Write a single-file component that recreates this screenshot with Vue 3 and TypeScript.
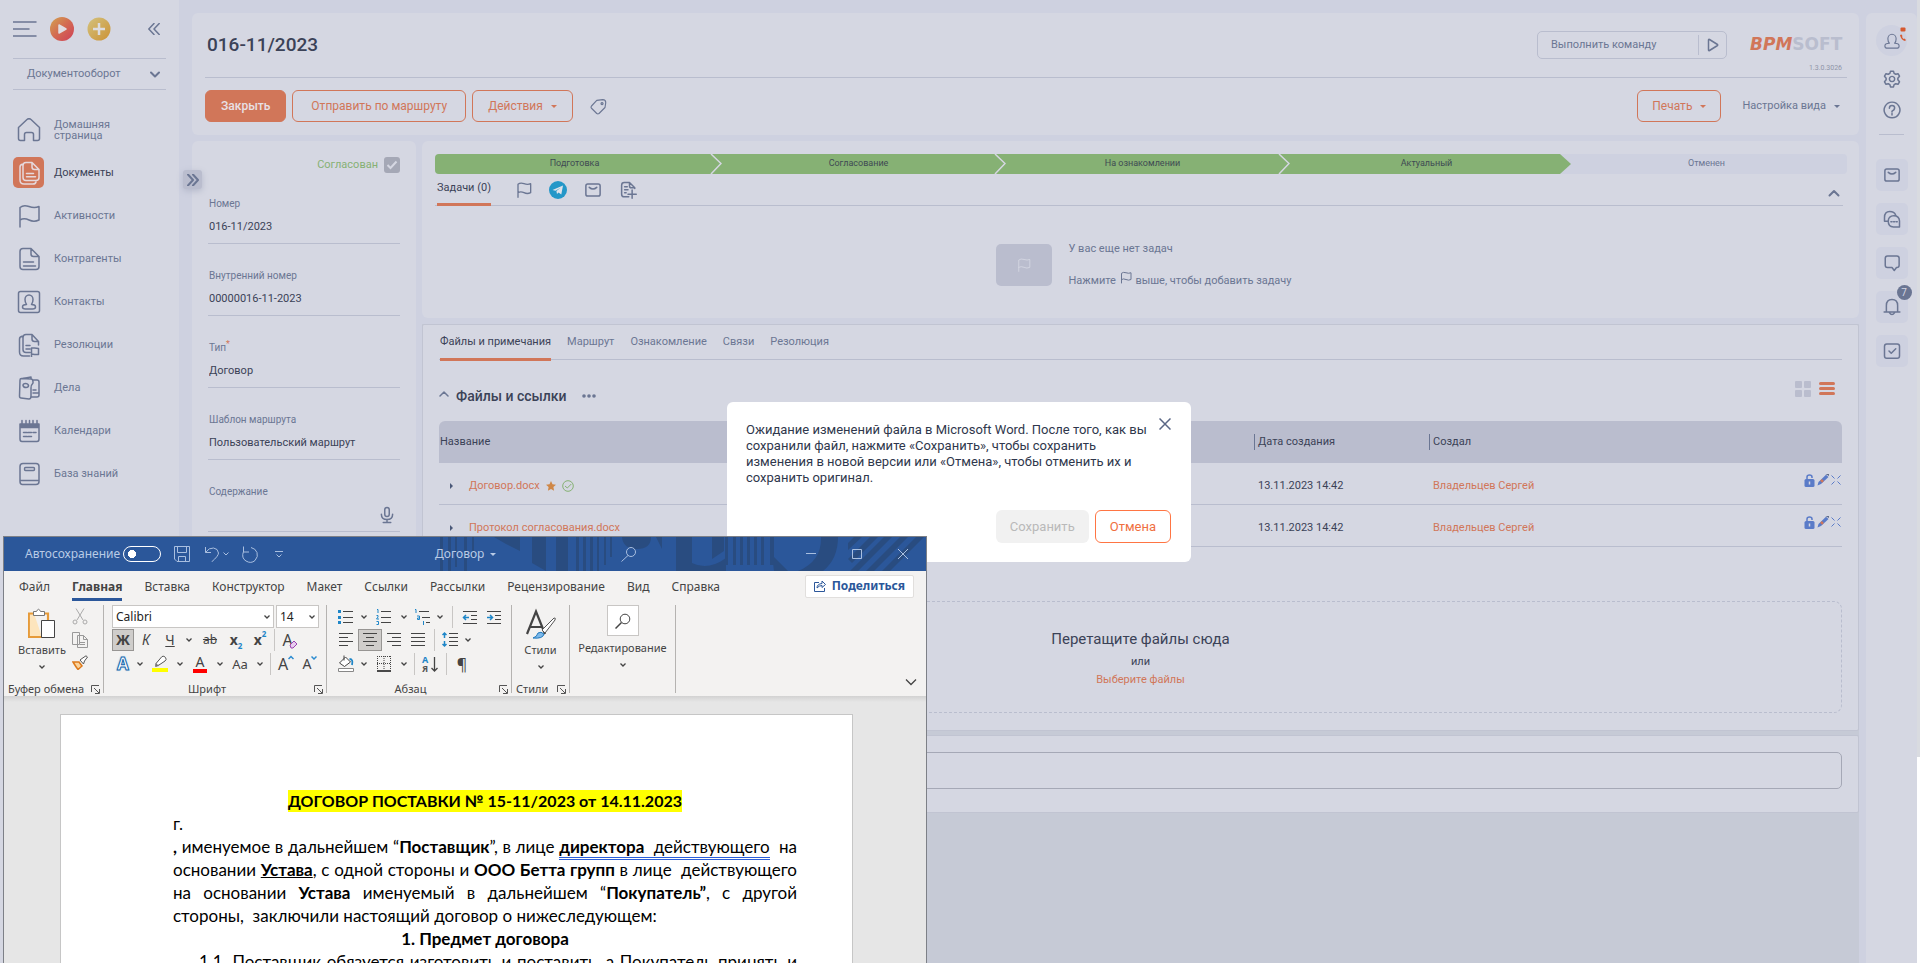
<script setup lang="ts">
import { ref } from 'vue'

interface NavItem { label: string; icon: string; active?: boolean }
interface Field { id: string; label: string; value: string; required?: boolean; mic?: boolean }
interface Tool { k: string; w: number; name: string; on?: boolean }

const icons: Record<string, string> = {
  home: 'M1.5 9.5 10 1.5q2-1.600 4 0l8.500 8v11q0 2-2 2h-4v-6q0-2-2-2h-5q-2 0-2 2v6h-4q-2 0-2-2z',
  flag: 'M3 23V3.500q3.500-3 9-1t10 0V16q-5 2.500-10 0t-9 0',
  doc: 'M14 1.500H6q-3 0-3 3v15q0 3 3 3h13q3 0 3-3v-10L14 1.500V7q0 2.500 2.500 2.500H22M6.500 15h10M6.500 19h12',
  docs: 'M15 1.500H9q-3 0-3 3v12q0 3 3 3h10q3 0 3-3V8.500L15 1.500V6q0 2.500 2.500 2.500H22M6 3Q3 3.500 3 6v13q0 4 4 4h9q2.500 0 3-2M9.500 12.500h7M9.500 15.800h9',
  contact: 'M3.500 1.500h17q2 0 2 2v17q0 2-2 2h-17q-2 0-2-2v-17q0-2 2-2zM8 9.500a4 4.500 0 0 1 8 0q0 3-1.500 5 4 0 4 2.500 0 2-3 2H8.500q-3 0-3-2 0-2.500 4-2.500Q8 12.500 8 9.500z',
  resol: 'M21.500 12V8.500L15 1.500H9q-3 0-3 3v12q0 3 3 3h4M15 1.500V6q0 2.500 2.500 2.500h4M6 3Q2.500 3.500 2.500 6v13q0 4 4 4h6M9 12.500h4M9 16h4M14.500 24v-9h3l4 .5v6h-4l-3-.5',
  cases: 'M3 4q0-1.500 1.500-1.500L14 3q2 0 2 3v1q-2 2-2 5v8q0 3-2 3l-8-1q-1.500 0-1.500-2zM6 2.500l8-1.500v2M16 4h4q2 0 2 2v13q0 2-2 2h-6M6 9.500q0-2 2.500-2t3 2q0 2-2.500 2t-3-2M16 14h3M16 17h5',
  cal: 'M3 5h19v15q0 2.500-2 2.500H5q-2 0-2-2.500zM3 6h19M3 7.500h19M3 8.500h19M5 1.500V4M9 1.500V4M12.500 1.500V4M16 1.500V4M20 1.500V4M6.500 13.500H10M11 13.500h3.500M16 13.500h3M6.500 17.500H10M11 17.500h3.500',
  book: 'M6 1.500h13q3 0 3 3v15q0 3-3 3H5.500q-2.500 0-2.500-3v-15q0-3 3-3zM3 18.500h19M8.500 5.500h8q1 0 1 1.500t-1 1.500h-8q-1 0-1-1.500t1-1.500z',
  mail: 'M5 4h14q2.500 0 2.500 2.500v11Q21.500 20 19 20H5q-2.500 0-2.500-2.500v-11Q2.500 4 5 4zM7 8.500q5 4.500 10 0',
  chat: 'M17 7q-2-5-8-5-7 0-7 8v5h5M14.500 7.500q7 0 7.500 7v8h-8q-7 0-7-7.500 0-7 7.500-7.500zM10.500 15.500h1.500M14 15.500h1.500M17.500 15.500H19',
  comment: 'M6 2.500h12.500q3 0 3 3V15q0 3-3 3H18l-3 4-3-4H6q-3 0-3-3V5.500q0-3 3-3z',
  bell: 'M4.500 18.500V10q0-8 7.500-8t7.500 8v8.500M1.500 18.500h21M8.500 19.500q3.500 5 7 0',
  task: 'M5 2.500h14q3 0 3 3v13q0 3-3 3H5q-3 0-3-3v-13q0-3 3-3zM8 12l3 3 6-6',
  gear: 'M10 1.500h4l.8 3 2.200 1.200 3-.8 2 3.400-2.200 2.700v2l2.200 2.700-2 3.400-3-.8-2.200 1.200-.8 3h-4l-.8-3L7 18.300l-3 .8-2-3.400 2.200-2.700v-2L2 8.300l2-3.400 3 .8 2.200-1.200zM12 8.500a3.500 3.500 0 1 0 .1 0z',
  help: 'M12 1.500A10.500 10.500 0 1 0 12.100 1.500zM8.500 9.500q0-3.500 3.500-3.500t3.500 3-3.500 4.500v1M12 16.500v2',
  user: 'M6.500 9a5.500 6 0 0 1 11 0q0 4-2 6 6 0 6 3.500 0 3-3 3h-13q-3 0-3-3Q2.500 15 8.500 15q-2-2-2-6z',
  docplus: 'M13 21H7q-3.500 0-3.500-3.500v-12Q3.500 2 7 2h7l7 7v1M14 2v4.500q0 2.500 2.500 2.500H21M7.500 7.500H11M7.500 11.500H12M7.500 15.500h2M17.500 12v11M12 17.500h11',
  tag: 'M9 4.500 17 3.500q4 0 4 4L20 14l-8 8q-1.500 1-3 0L2 15q-1.200-1.500 0-3zM16 7.500a1.300 1.300 0 1 0 .1 0z',
  mic: 'M12 2q3 0 3 3v6q0 3-3 3t-3-3V5q0-3 3-3zM4.500 11q0 7 7.500 7t7.500-7M12 18v4M7 22h10',
}

const nav: NavItem[] = [
  { label: 'Домашняя страница', icon: 'home' },
  { label: 'Документы', icon: 'docs', active: true },
  { label: 'Активности', icon: 'flag' },
  { label: 'Контрагенты', icon: 'doc' },
  { label: 'Контакты', icon: 'contact' },
  { label: 'Резолюции', icon: 'resol' },
  { label: 'Дела', icon: 'cases' },
  { label: 'Календари', icon: 'cal' },
  { label: 'База знаний', icon: 'book' },
]

const fields = ref<Field[]>([
  { id: 'num', label: 'Номер', value: '016-11/2023' },
  { id: 'inner', label: 'Внутренний номер', value: '00000016-11-2023' },
  { id: 'type', label: 'Тип', value: 'Договор', required: true },
  { id: 'route', label: 'Шаблон маршрута', value: 'Пользовательский маршрут' },
  { id: 'content', label: 'Содержание', value: '', mic: true },
])

const stages = ['Подготовка', 'Согласование', 'На ознакомлении', 'Актуальный', 'Отменен']
const tabs = ['Файлы и примечания', 'Маршрут', 'Ознакомление', 'Связи', 'Резолюция']
const files = [
  { name: 'Договор.docx', marked: true, date: '13.11.2023 14:42', author: 'Владельцев Сергей' },
  { name: 'Протокол согласования.docx', marked: false, date: '13.11.2023 14:42', author: 'Владельцев Сергей' },
]
const rail = [
  { icon: 'mail', name: 'Почта' },
  { icon: 'chat', name: 'Чаты' },
  { icon: 'comment', name: 'Сообщения' },
  { icon: 'bell', name: 'Уведомления', badge: 7 },
  { icon: 'task', name: 'Задачи' },
]

const wordTabs = ['Файл', 'Главная', 'Вставка', 'Конструктор', 'Макет', 'Ссылки', 'Рассылки', 'Рецензирование', 'Вид', 'Справка']
const caret = (w = 12): Tool => ({ k: 'caret', w, name: 'Ещё' })
const sep = (w = 8): Tool => ({ k: 'sep', w, name: '' })
const fontRow1: Tool[] = [
  { k: 'bold', w: 22, name: 'Полужирный', on: true }, { k: 'italic', w: 24, name: 'Курсив' },
  { k: 'under', w: 24, name: 'Подчёркнутый' }, caret(14), { k: 'strike', w: 28, name: 'Зачёркнутый' },
  { k: 'sub', w: 24, name: 'Подстрочный' }, { k: 'sup', w: 24, name: 'Надстрочный' }, sep(4),
  { k: 'clear', w: 28, name: 'Очистить формат' },
]
const fontRow2: Tool[] = [
  { k: 'effects', w: 22, name: 'Эффекты' }, caret(), { k: 'marker', w: 28, name: 'Выделение' }, caret(),
  { k: 'color', w: 28, name: 'Цвет' }, caret(), { k: 'case', w: 28, name: 'Регистр' }, caret(), sep(8),
  { k: 'grow', w: 24, name: 'Увеличить' }, { k: 'shrink', w: 24, name: 'Уменьшить' },
]
const paraRows: Tool[][] = [
  [{ k: 'bullets', w: 24, name: 'Маркеры' }, caret(), { k: 'numbers', w: 28, name: 'Нумерация' }, caret(),
    { k: 'multi', w: 24, name: 'Многоуровневый список' }, caret(), sep(12), { k: 'outdent', w: 24, name: 'Уменьшить отступ' },
    { k: 'indent', w: 24, name: 'Увеличить отступ' }],
  [{ k: 'left', w: 24, name: 'По левому краю' }, { k: 'center', w: 24, name: 'По центру', on: true },
    { k: 'right', w: 24, name: 'По правому краю' }, { k: 'just', w: 24, name: 'По ширине' }, sep(),
    { k: 'spacing', w: 24, name: 'Интервал' }, caret()],
  [{ k: 'bucket', w: 24, name: 'Заливка' }, caret(), { k: 'borders', w: 28, name: 'Границы' }, caret(), sep(),
    { k: 'sort', w: 24, name: 'Сортировка' }, sep(), { k: 'pil', w: 24, name: 'Знаки' }],
]
const toolPaths: Record<string, string> = {
  left: 'M3 3.500h14M3 7.500h9M3 11.500h14M3 15.500h9',
  center: 'M3 3.500h14M6 7.500h8M3 11.500h14M6 15.500h8',
  right: 'M3 3.500h14M8 7.500h9M3 11.500h14M8 15.500h9',
  just: 'M3 3.500h14M3 7.500h14M3 11.500h14M3 15.500h14',
  bullets: 'M7 4.500h10M7 10.500h10M7 15.500h10',
  numbers: 'M7 4.500h10M7 10.500h10M7 15.500h10',
  multi: 'M7 4.500h10M10 10.500h8M14 15.500h4',
  outdent: 'M3 4.500h14M11 8.500h6M11 12.500h6M3 16.500h14',
  indent: 'M3 4.500h14M11 8.500h6M11 12.500h6M3 16.500h14',
  spacing: 'M9 3.500h9M9 7.500h9M9 11.500h9M9 15.500h9',
}

const activeTab = ref(0)
const command = ref('')
const approved = ref(true)
const note = ref('')
const font = ref('Calibri')
const size = ref('14')
</script>

<template>
  <div class="desk">
    <div class="app">
      <aside class="side">
        <div class="side-top">
          <button class="bare" aria-label="Меню">
            <svg width="24" height="18" class="ln"><path d="M0 2h23M0 9h16M0 16h23" /></svg>
          </button>
          <button class="bare" aria-label="Запуск">
            <svg width="24" height="24">
              <defs>
                <linearGradient id="gp" x1="0" y1="0" x2="1" y2="1"><stop offset="0" stop-color="#d3a351" /><stop offset=".5" stop-color="#d36a52" /><stop offset="1" stop-color="#cf3f58" /></linearGradient>
                <linearGradient id="gy" x1="0" y1="0" x2="1" y2="1"><stop offset="0" stop-color="#d3c27e" /><stop offset="1" stop-color="#cc9235" /></linearGradient>
              </defs>
              <circle cx="12" cy="12" r="12" fill="url(#gp)" /><path d="M9 8v8l7-4z" fill="#e0dde2" stroke="#e0dde2" stroke-width="1.500" stroke-linejoin="round" />
            </svg>
          </button>
          <button class="bare" aria-label="Добавить">
            <svg width="24" height="24"><circle cx="12" cy="12" r="11.500" fill="url(#gy)" /><path d="M12 6v12M6 12h12" stroke="#dcdce0" stroke-width="2.500" /></svg>
          </button>
          <button class="bare fold" aria-label="Свернуть">
            <svg width="12" height="12" class="ln"><path d="M6 .5.800 6 6 11.500M11.200.5 6 6l5.200 5.500" /></svg>
          </button>
        </div>
        <button class="workplace">
          <span>Документооборот</span>
          <svg width="10" height="7" class="ln bold"><path d="m1 1.500 4 4 4-4" /></svg>
        </button>
        <nav>
          <a v-for="n in nav" :key="n.label" href="#" class="nav" :class="{ active: n.active }">
            <span class="nav-ico"><svg width="24" height="24" viewBox="0 0 24 24" class="ln"><path :d="icons[n.icon]" /></svg></span>
            <span class="nav-label">{{ n.label }}</span>
          </a>
        </nav>
      </aside>

      <main class="main">
        <header class="panel head">
          <div class="head-top">
            <h1>016-11/2023</h1>
            <div class="cmd">
              <input v-model="command" aria-label="Выполнить команду" placeholder="Выполнить команду">
              <button class="bare" aria-label="Выполнить"><svg width="12" height="14" class="ln"><path d="M1.500 2v10q0 1 1 .5l8-5q.6-.5 0-1l-8-5q-1-.5-1 .5z" /></svg></button>
            </div>
            <div class="brand">
              <div class="logo"><b>BPM</b><span>SOFT</span></div>
              <small>1.3.0.3026</small>
            </div>
          </div>
          <div class="head-bar">
            <button class="btn solid">Закрыть</button>
            <button class="btn send">Отправить по маршруту</button>
            <button class="btn">Действия<i class="tri" /></button>
            <button class="bare tag" aria-label="Теги"><svg width="18" height="18" viewBox="0 0 24 24" class="ln"><path :d="icons.tag" /></svg></button>
            <button class="btn print push">Печать<i class="tri" /></button>
            <button class="bare view">Настройка вида<i class="tri" /></button>
          </div>
        </header>

        <div class="body">
          <section class="panel form">
            <button class="expand" aria-label="Развернуть">
              <svg width="12" height="12" class="ln bold"><path d="M1 .5 6 6l-5 5.500M6 .5 11 6l-5 5.500" /></svg>
            </button>
            <label class="approved">Согласован<input v-model="approved" type="checkbox"><svg width="12" height="10"><path d="m1.500 5 3 3 6-6.500" fill="none" stroke="#d5d7e2" stroke-width="2" /></svg></label>
            <div v-for="f in fields" :key="f.id" class="field">
              <label :for="f.id">{{ f.label }}<sup v-if="f.required">*</sup></label>
              <div class="val">
                <input :id="f.id" v-model="f.value">
                <svg v-if="f.mic" width="18" height="18" viewBox="0 0 24 24" class="ln thick"><path :d="icons.mic" /></svg>
              </div>
            </div>
          </section>

          <div class="content">
            <section class="panel tasks">
              <ol class="stages">
                <li v-for="(s, i) in stages" :key="s" :class="{ done: i < 4, last: i === 3 }">
                  <span>{{ s }}</span>
                  <svg v-if="i < 3" width="12" height="20"><path d="m1 0 10 9.500L1 20" fill="none" stroke="#d5d7e2" stroke-width="1.500" /></svg>
                </li>
              </ol>
              <div class="task-bar">
                <button class="tab on">Задачи (0)</button>
                <button class="bare" aria-label="Задача"><svg width="16" height="16" viewBox="0 0 24 24" class="ln thick"><path :d="icons.flag" /></svg></button>
                <button class="bare" aria-label="Telegram"><svg width="18" height="18"><circle cx="9" cy="9" r="9" fill="#2497c8" /><path d="m3.500 9 10.500-4.500-1.700 9L9.500 11.500 8 13l-.6-3L12 6.500 6.500 9.800z" fill="#dfe3ea" /></svg></button>
                <button class="bare" aria-label="Письмо"><svg width="18" height="18" viewBox="0 0 24 24" class="ln thick"><path :d="icons.mail" /></svg></button>
                <button class="bare" aria-label="Документ"><svg width="18" height="18" viewBox="0 0 24 24" class="ln thick"><path :d="icons.docplus" /></svg></button>
                <button class="bare push" aria-label="Свернуть задачи"><svg width="12" height="8" class="ln bold"><path d="m1.500 6.500 4.500-4.500 4.500 4.500" /></svg></button>
              </div>
              <div class="empty">
                <div class="empty-box"><svg width="14" height="14" viewBox="0 0 24 24" class="ln pale"><path :d="icons.flag" /></svg></div>
                <div class="empty-text">
                  <p>У вас еще нет задач</p>
                  <p>Нажмите <svg width="12" height="13" viewBox="0 0 24 24" class="ln thick"><path :d="icons.flag" /></svg> выше, чтобы добавить задачу</p>
                </div>
              </div>
            </section>

            <div class="lower">
              <section class="sheet files">
                <div class="tabs">
                  <button v-for="(t, i) in tabs" :key="t" class="tab" :class="{ on: i === activeTab }" @click="activeTab = i">{{ t }}</button>
                </div>
                <div class="files-head">
                  <svg width="10" height="6" class="ln"><path d="m1 5 4-4 4 4" /></svg>
                  <h2>Файлы и ссылки</h2>
                  <button class="bare dots" aria-label="Действия с файлами"><svg width="14" height="4" fill="#6b7693"><circle cx="2" cy="2" r="1.800" /><circle cx="7" cy="2" r="1.800" /><circle cx="12" cy="2" r="1.800" /></svg></button>
                  <button class="bare push" aria-label="Плитка"><svg width="16" height="16" fill="#babdce"><rect width="7" height="7" rx="1" /><rect x="9" width="7" height="7" rx="1" /><rect y="9" width="7" height="7" rx="1" /><rect x="9" y="9" width="7" height="7" rx="1" /></svg></button>
                  <button class="bare" aria-label="Список"><svg width="16" height="13" fill="#d17659"><rect width="16" height="3" rx="1.500" /><rect y="5" width="16" height="3" rx="1.500" /><rect y="10" width="16" height="3" rx="1.500" /></svg></button>
                </div>
                <table>
                  <colgroup><col><col class="c-date"><col class="c-author"><col class="c-act"></colgroup>
                  <thead><tr><th>Название</th><th class="bar">Дата создания</th><th class="bar">Создал</th><th /></tr></thead>
                  <tbody>
                    <tr v-for="f in files" :key="f.name">
                      <td>
                        <div class="fname">
                          <svg width="3" height="6" fill="#4a5878"><path d="m0 0 3 3-3 3z" /></svg>
                          <a href="#">{{ f.name }}</a>
                          <svg v-if="f.marked" width="10" height="10" fill="#cf8747"><path d="m5 0 1.500 3.300 3.500.4-2.600 2.400.7 3.600L5 8 1.900 9.700l.7-3.600L0 3.700l3.500-.4z" /></svg>
                          <svg v-if="f.marked" width="12" height="12" fill="none" stroke="#86b174"><circle cx="6" cy="6" r="5.300" /><path d="m3 6 2.300 2 4-4" /></svg>
                        </div>
                      </td>
                      <td>{{ f.date }}</td>
                      <td><a href="#">{{ f.author }}</a></td>
                      <td>
                        <div class="acts">
                          <svg width="11" height="13"><path d="M3 6V3q0-2 2.500-2T8 3v1" fill="none" stroke="#5a7bc8" stroke-width="1.500" /><rect x=".5" y="5" width="10" height="8" rx="1.500" fill="#5a7bc8" /><path d="M5.500 7.500v3" stroke="#d5d7e2" stroke-width="1.500" /></svg>
                          <svg width="12" height="12"><path d="M.5 11.500 1.500 8 9 .8 11.500 3 4 10z" fill="#5a7bc8" /><path d="m4 5.800 2 2" stroke="#d17659" stroke-width="2.500" /><path d="M8.500 0H12v2z" fill="#5d6b8c" /></svg>
                          <svg width="10" height="12" stroke="#5a7bc8"><path d="m.5 1.500 3 3M9.500 1.500l-3 3M.5 10.500l3-3M9.500 10.500l-3-3" /></svg>
                        </div>
                      </td>
                    </tr>
                  </tbody>
                </table>
                <div class="drop">
                  <p class="drop-title">Перетащите файлы сюда</p>
                  <p>или</p>
                  <a href="#">Выберите файлы</a>
                </div>
              </section>
              <section class="sheet notes">
                <input v-model="note" aria-label="Примечание">
              </section>
            </div>
          </div>
        </div>
      </main>

      <aside class="rail">
        <button class="avatar" aria-label="Профиль">
          <svg width="18" height="18" viewBox="0 0 24 24" class="ln"><path :d="icons.user" /></svg>
          <svg width="6" height="14" class="call"><rect x=".5" y=".5" width="5" height="4" rx="1" fill="#d6592f" /><path d="M0 8l1.500-.5 1 1.500-.5 1 1.500 2 1-.5L6 13l-1 1Q1 13 0 8z" fill="#d6592f" /></svg>
        </button>
        <button class="bare gear" aria-label="Настройки"><svg width="18" height="18" viewBox="0 0 24 24" class="ln thick"><path :d="icons.gear" /></svg></button>
        <button class="bare help" aria-label="Справка"><svg width="18" height="18" viewBox="0 0 24 24" class="ln thick"><path :d="icons.help" /></svg></button>
        <hr>
        <button v-for="r in rail" :key="r.name" class="rail-btn" :aria-label="r.name">
          <svg width="18" height="18" viewBox="0 0 24 24" class="ln thick"><path :d="icons[r.icon]" /></svg>
          <span v-if="r.badge" class="badge">{{ r.badge }}</span>
        </button>
      </aside>
      <div class="scroll"><div class="thumb" /></div>
    </div>

    <div class="modal" role="dialog" aria-modal="true" aria-labelledby="msg">
      <div class="modal-top">
        <p id="msg">Ожидание изменений файла в Microsoft Word. После того, как вы сохранили файл, нажмите «Сохранить», чтобы сохранить изменения в новой версии или «Отмена», чтобы отменить их и сохранить оригинал.</p>
        <button class="bare" aria-label="Закрыть окно"><svg width="12" height="12"><path d="m.5.5 11 11m0-11-11 11" stroke="#5a6785" stroke-width="1.500" /></svg></button>
      </div>
      <div class="modal-acts">
        <button class="save" disabled>Сохранить</button>
        <button class="cancel">Отмена</button>
      </div>
    </div>

    <div class="word">
      <div class="wbar">
        <svg class="art" width="490" height="34" fill="#294c80">
          <path d="M4 0h3v34H4zM12 0h3v34h-3zM19 0h2v30h-2zM28 0h3v34h-3zM36 0h2v20h-2zM58 0h26v14L70 7zM96 0h14v34l-14-8zM120 0h12v34h-12zM140 0h3v34h-3zM147 0h3v34h-3zM154 0h3v34h-3zM161 0h2v34h-2zM168 0h2v28h-2zM174 0h2v20h-2z" />
          <path d="M186 0h29q0 12-14 12T186 0zM220 0h6v12zM240 0h16v34h-16zM256 26q16 8 34-5v13h-34zM276 0h12v14l-12 8zM289 0h3v28h-3zM297 0h3v28h-3zM304 0h3v28h-3zM311 0h3v28h-3zM318 0h3v28h-3zM325 0h3v28h-3zM334 0h4v28h-4zM336 18l16 16h-14zM362 34q24-10 23-34h17q0 22-15 34z" />
          <path d="m412 6 6-6h8l-14 13zM412 22 434 0h8l-26 26zM414 34l34-34h8l-34 34zM430 34l34-34h8l-34 34zM446 34l34-34h8l-34 34z" />
        </svg>
        <label class="auto">Автосохранение<input type="checkbox" role="switch"></label>
        <button class="bare" aria-label="Сохранить"><svg width="16" height="16" class="wl"><path d="M.5.5h15v15H3l-2.500-2.500zM3.500.5v6h9v-6M4.500 15.500v-5h7v5" /></svg></button>
        <button class="bare undo" aria-label="Отменить"><svg width="26" height="16" class="wl"><path d="M1.500 1v5.500H7M1.500 6.500Q5 1.500 9.500 2t5 5q0 3-7 9M19.500 6.500 22 9l2.500-2.500" /></svg></button>
        <button class="bare" aria-label="Повторить"><svg width="18" height="17" class="wl"><path d="M2.500.5V6H8M2.500 5.500Q0 12 5 15t9-.5q3.500-4 2-8T10 1.500" /></svg></button>
        <button class="bare more" aria-label="Настройка панели"><svg width="8" height="8" class="wl"><path d="M0 1.500h8M1.500 4.500 4 7l2.500-2.500" /></svg></button>
        <span class="wtitle">Договор<i class="tri" /></span>
        <button class="bare find" aria-label="Поиск"><svg width="16" height="16" class="wl"><circle cx="10" cy="6" r="4.500" /><path d="M7 9.500.5 15.500" /></svg></button>
        <button class="bare win" aria-label="Свернуть окно"><svg width="12" height="12" class="wl"><path d="M1 5.500h10" /></svg></button>
        <button class="bare win" aria-label="Развернуть окно"><svg width="12" height="12" class="wl"><path d="M1.500 1.500h9v9h-9z" /></svg></button>
        <button class="bare win" aria-label="Закрыть Word"><svg width="12" height="12" class="wl"><path d="m1 1 10 10M11 1 1 11" /></svg></button>
      </div>
      <div class="wtabs">
        <button v-for="(t, i) in wordTabs" :key="t" :class="{ on: i === 1 }">{{ t }}</button>
        <button class="share"><svg width="12" height="12" fill="none" stroke="#2b579a"><path d="M5 2.500H.5v9h10V8M3 8q0-4 5-4.500V1l3.500 3.500L8 7.500V5.500Q5 5.500 3 8z" /></svg>Поделиться</button>
      </div>
      <div class="ribbon">
        <div class="grp clip">
          <div class="clip-in">
            <button class="big"><svg width="28" height="32"><path d="M6 5.500H.8V29H14" fill="#fde5bd" stroke="#e69b3a" stroke-width="2.200" /><path d="M6 5.500h14V12" fill="none" stroke="#e69b3a" stroke-width="2.200" /><path d="M5.500 7.500v-4h3q2-4.500 4 0h4v4z" fill="#fff" stroke="#777" /><path d="M13.500 12.500h13v17h-13z" fill="#fff" stroke="#444" /></svg>Вставить<svg width="8" height="6" class="cr"><path d="m1.500 1.500 2.500 2.500 2.500-2.500" /></svg></button>
            <div class="clip-col">
              <button class="bare" aria-label="Вырезать"><svg width="16" height="17" fill="none" stroke="#aaa"><path d="M4 .5 11 12M12 .5 5 12" /><circle cx="3" cy="14" r="2" /><circle cx="13" cy="14" r="2" /></svg></button>
              <button class="bare" aria-label="Копировать"><svg width="16" height="16" fill="#f3f2f1" stroke="#999"><path d="M.5.500h7v12h-7zM5.500 3.500h6l4 4v8h-10zM11.500 3.500v4h4M8 10.500h5M8 12.500h5" /></svg></button>
              <button class="bare" aria-label="Формат по образцу"><svg width="16" height="15"><path d="M1 7h6l3 4-4 3.500Q4 12 1 7z" fill="#fbd39b" stroke="#dd7a1c" stroke-width="1.500" /><path d="m8 5 2-1.500L14 .800 15.500 2l-3 4-1 3z" fill="#fff" stroke="#555" /></svg></button>
            </div>
          </div>
          <div class="cap">Буфер обмена<svg width="9" height="9" class="ex"><path d="M.5 7V.500H8M3 3l5 5M8.500 4v4.500H4" /></svg></div>
        </div>

        <div class="grp fontg">
          <div class="row">
            <span class="combo wide"><select v-model="font" aria-label="Шрифт"><option>Calibri</option></select><svg width="8" height="6" class="cr"><path d="m1.500 1.500 2.500 2.500 2.500-2.500" /></svg></span>
            <span class="combo"><select v-model="size" aria-label="Размер"><option>14</option></select><svg width="8" height="6" class="cr"><path d="m1.500 1.500 2.500 2.500 2.500-2.500" /></svg></span>
          </div>
          <div v-for="(r, ri) in [fontRow1, fontRow2]" :key="ri" class="row">
            <template v-for="(t, i) in r" :key="i">
              <span v-if="t.k === 'sep'" class="sep" :style="{ width: t.w + 'px' }" />
              <button v-else class="tool" :class="[t.k, { pressed: t.on }]" :aria-label="t.name" :style="{ width: t.w + 'px' }">
                <svg v-if="t.k === 'caret'" width="8" height="6" class="cr"><path d="m1.500 1.500 2.500 2.500 2.500-2.500" /></svg>
                <b v-else-if="t.k === 'bold'">Ж</b>
                <i v-else-if="t.k === 'italic'">К</i>
                <u v-else-if="t.k === 'under'">Ч</u>
                <s v-else-if="t.k === 'strike'">ab</s>
                <template v-else-if="t.k === 'sub'"><b>x</b><sub>2</sub></template>
                <template v-else-if="t.k === 'sup'"><b>x</b><sup>2</sup></template>
                <template v-else-if="t.k === 'clear'">A<svg width="9" height="9"><path d="m1 5 4-4 3 3-4 4H2z" fill="#e7cdef" stroke="#9a43b0" /></svg></template>
                <b v-else-if="t.k === 'effects'">A</b>
                <svg v-else-if="t.k === 'marker'" width="18" height="18"><path d="m5 8.500 6-7q2-1 3.500 1T14 6L8 10l-3 1z" fill="#fff" stroke="#555" /><path d="m5 8 3 3-4 1z" fill="#777" /><path d="M1 13h16v4H1z" fill="#ff0" /></svg>
                <span v-else-if="t.k === 'color'" class="red">A</span>
                <template v-else-if="t.k === 'case'">Aa</template>
                <template v-else>A<svg width="6" height="12" fill="none" stroke="#2b8bd0" stroke-width="1.500"><path :d="t.k === 'grow' ? 'm.5 4 2.500-2.500L5.500 4' : 'm.5 1.500L3 4l2.500-2.500'" /></svg></template>
              </button>
            </template>
          </div>
          <div class="cap">Шрифт<svg width="9" height="9" class="ex"><path d="M.5 7V.500H8M3 3l5 5M8.500 4v4.500H4" /></svg></div>
        </div>

        <div class="grp para">
          <div v-for="(r, ri) in paraRows" :key="ri" class="row">
            <template v-for="(t, i) in r" :key="i">
              <span v-if="t.k === 'sep'" class="sep" :style="{ width: t.w + 'px' }" />
              <button v-else class="tool" :class="{ pressed: t.on }" :aria-label="t.name" :style="{ width: t.w + 'px' }">
                <svg v-if="t.k === 'caret'" width="8" height="6" class="cr"><path d="m1.500 1.500 2.500 2.500 2.500-2.500" /></svg>
                <span v-else-if="t.k === 'pil'" class="pil">¶</span>
                <svg v-else width="20" height="20" fill="none" stroke="#444">
                  <path v-if="toolPaths[t.k]" :d="toolPaths[t.k]" />
                  <path v-if="t.k === 'bullets'" d="M2 3h3v3H2zM2 9h3v3H2zM2 14h3v3H2z" fill="#1e86c8" stroke="none" />
                  <path v-if="t.k === 'numbers'" d="M3 2.500h1V6M2.500 8.500H4v1.500L2.500 12H5M2.500 14.500h2v3h-2" stroke="#1e86c8" />
                  <path v-if="t.k === 'multi'" d="M3 2.500h1V6M5 9h2.500v3.500h-2V11H7M11.500 14v4" stroke="#1e86c8" />
                  <path v-if="t.k === 'outdent'" d="M9 10.500H3.500M6 8l-2.500 2.500L6 13" stroke="#1e86c8" stroke-width="1.500" />
                  <path v-if="t.k === 'indent'" d="M3 10.500h5.500M6 8l2.500 2.500L6 13" stroke="#1e86c8" stroke-width="1.500" />
                  <path v-if="t.k === 'spacing'" d="M4.500 3v5M2.500 5l2-2 2 2M4.500 11v5M2.500 14l2 2 2-2" stroke="#1e86c8" stroke-width="1.500" />
                  <g v-if="t.k === 'bucket'"><path d="m3.500 9 6-6 5 5-6 4.500z" fill="#fff" /><path d="M8 1.500v5" /><path d="M13.500 5q4 0 2.500 6" stroke="#1e86c8" stroke-width="1.800" /><path d="M2.500 14.500h15v3h-15z" fill="#fff" stroke="#888" /></g>
                  <g v-if="t.k === 'borders'"><path d="M3.500 2v14M16.500 2v14M10 2v14M3 2.500h14M3 9.500h14" stroke-dasharray="1 1" /><path d="M3 17h14" stroke="#111" stroke-width="1.500" /></g>
                  <g v-if="t.k === 'sort'"><text x="2" y="9" class="srt a">А</text><text x="2" y="18" class="srt">Я</text><path d="M14.500 3v14M11.500 14l3 3 3-3" stroke-width="1.300" /></g>
                </svg>
              </button>
            </template>
          </div>
          <div class="cap">Абзац<svg width="9" height="9" class="ex"><path d="M.5 7V.500H8M3 3l5 5M8.500 4v4.500H4" /></svg></div>
        </div>

        <div class="grp styles">
          <button class="big"><svg width="32" height="32"><path d="M2 26 11 3.500 20 26M5 19h12" fill="none" stroke="#444" stroke-width="2.200" /><path d="M17 22 29 10q2-.5 1 2L20 25z" fill="#fff" stroke="#555" /><path d="M8 30q4-1 5-5 3-2 6 1-1 5-11 4z" fill="#7db9ea" stroke="#1e78bd" /></svg>Стили<svg width="8" height="6" class="cr"><path d="m1.500 1.500 2.500 2.500 2.500-2.500" /></svg></button>
          <div class="cap">Стили<svg width="9" height="9" class="ex"><path d="M.5 7V.500H8M3 3l5 5M8.500 4v4.500H4" /></svg></div>
        </div>

        <div class="grp edit">
          <button class="big"><span class="lens"><svg width="16" height="16" fill="none" stroke="#444"><circle cx="10" cy="6" r="4.800" /><path d="M6.500 9.500.5 15.500" stroke-width="1.500" /></svg></span>Редактирование<svg width="8" height="6" class="cr"><path d="m1.500 1.500 2.500 2.500 2.500-2.500" /></svg></button>
        </div>
        <button class="bare fold-rb" aria-label="Свернуть ленту"><svg width="12" height="8" fill="none" stroke="#444" stroke-width="1.300"><path d="m1 1.500 5 5 5-5" /></svg></button>
      </div>
      <div class="canvas">
        <article class="page">
          <p class="mid title"><mark>ДОГОВОР ПОСТАВКИ № 15-11/2023 от 14.11.2023</mark></p>
          <p>г.</p>
          <p class="full"><b>,</b> именуемое в дальнейшем “<b>Поставщик</b>”, в лице <span class="gram"><b>директора</b>&nbsp; действующего</span>&nbsp; на</p>
          <p class="full">основании <b><u>Устава</u></b>, с одной стороны и <b>ООО Бетта групп</b> в лице&nbsp; действующего</p>
          <p class="full">на основании <b>Устава</b> именуемый в дальнейшем “<b>Покупатель”</b>, с другой</p>
          <p>стороны,&nbsp; заключили настоящий договор о нижеследующем:</p>
          <p class="mid"><b>1. Предмет договора</b></p>
          <p class="full in">1.1. Поставщик обязуется изготовить и поставить, а Покупатель принять и</p>
        </article>
      </div>
    </div>
  </div>
</template>

<style>
html, body { margin: 0; background: #ced1e0; overflow: hidden; }
</style>

<style scoped>
* { box-sizing: border-box; }
.desk { position: relative; height: 100vh; overflow: hidden; font: 11px/16px Roboto, "Noto Sans", sans-serif; color: #3b4257; background: #ced1e0; }
button, input, select { font: inherit; color: inherit; margin: 0; padding: 0; border: 0; background: none; min-width: 0; outline: 0; }
a { color: #d17659; text-decoration: none; }
p, h1, h2 { margin: 0; }
svg { flex: none; display: block; }
.bare { display: flex; align-items: center; justify-content: center; flex: none; }
.ln { fill: none; stroke: #6b7693; stroke-width: 1.500px; stroke-linejoin: round; stroke-linecap: round; }
.ln.thick { stroke-width: 2px; }
.ln.bold { stroke-width: 2px; }
.ln.pale { stroke: #d5d7e2; }
.tri { display: inline-block; width: 0; height: 0; border: 3px solid transparent; border-top-color: currentColor; border-bottom: 0; margin-left: 8px; vertical-align: middle; }
.push { margin-left: auto; }

.app { display: flex; height: 100%; }
.side { width: 179px; flex: none; background: #d5d7e2; padding: 0 13px; }
.side-top { display: flex; align-items: center; height: 59px; border-bottom: 1px solid #b9bdce; gap: 13px; }
.fold { margin: 0 6px 0 auto; }
.workplace { display: flex; align-items: center; justify-content: space-between; width: 100%; height: 31px; border-bottom: 1px solid #b9bdce; padding: 0 6px 0 14px; color: #6b7693; }
nav { padding-top: 18px; }
.nav { display: flex; align-items: center; height: 43px; color: #6b7693; gap: 10px; line-height: 11px; }
.nav-ico { width: 31px; height: 31px; border-radius: 5px; display: grid; place-items: center; flex: none; }
.nav-label { width: 80px; }
.nav.active { color: #3b4257; }
.nav.active .nav-ico { background: #d17659; }
.nav.active .ln { stroke: #e6d9dd; }

.main { flex: 1; min-width: 0; display: flex; flex-direction: column; gap: 6px; padding: 13px 7px 0 13px; }
.panel { background: #d5d7e2; border-radius: 6px; }
.head { height: 122px; padding: 0 12px 0 13px; flex: none; }
.head-top { display: flex; align-items: flex-start; height: 65px; border-bottom: 1px solid #b9bdce; }
h1 { font-size: 19px; line-height: 24px; font-weight: 500; margin: 20px auto 0 2px; }
.cmd { display: flex; width: 190px; height: 28px; border: 1px solid #b9bdce; border-radius: 5px; margin-top: 18px; color: #6b7693; }
.cmd input { flex: 1; padding-left: 13px; }
.cmd input::placeholder { color: #6b7693; opacity: 1; }
.cmd button { width: 28px; margin: 3px 0; border-left: 1px solid #b9bdce; }
.brand { width: 97px; margin: 23px 0 0 23px; text-align: right; }
.logo { display: flex; font: 700 17px/16px "DejaVu Sans", sans-serif; color: #b9bdce; }
.logo b { color: #d17659; font-style: italic; }
.brand small { display: block; font-size: 7px; line-height: 8px; color: #8f95a8; margin: 12px 5px 0 0; }
.head-bar { display: flex; align-items: center; gap: 6px; height: 56px; }
.btn { height: 32px; border: 1px solid #d17659; border-radius: 6px; padding: 0 15px; color: #d17659; font-size: 12px; flex: none; }
.btn.send { padding: 0 18px; }
.btn.print { padding: 0 14px; }
.btn.solid { background: #d17659; color: #e8e0e5; font-weight: 500; }
.tag { margin-left: 11px; }
.view { color: #6b7693; margin: 0 7px 0 15px; }

.body { flex: 1; min-height: 0; display: flex; gap: 6px; }
.form { width: 224px; flex: none; padding: 16px 16px 0; position: relative; }
.expand { position: absolute; left: -9px; top: 29px; width: 19px; height: 19px; background: #babdce; border-radius: 3px; box-shadow: 0 2px 6px #b4b8ca; display: grid; place-items: center; }
.approved { display: flex; justify-content: flex-end; align-items: center; gap: 6px; color: #86b174; height: 16px; margin-bottom: 22px; }
.approved input { appearance: none; width: 16px; height: 16px; border-radius: 3px; background: #a5a8b6; }
.approved svg { position: absolute; right: 18px; }
.field { height: 72px; color: #6b7693; font-size: 10px; }
.field label { display: block; height: 20px; padding: 1px 0 0 1px; }
.field sup { color: #d17659; line-height: 0; font-size: 9px; }
.val { display: flex; height: 29px; border-bottom: 1px solid #b9bdce; align-items: center; padding: 0 4px 4px 1px; }
.val input { flex: 1; font-size: 11px; color: #3b4257; }

.content { flex: 1; min-width: 0; display: flex; flex-direction: column; gap: 6px; }
.tasks { height: 177px; flex: none; padding: 13px 12px 0 13px; }
.stages { display: flex; margin: 0; padding: 0; list-style: none; height: 20px; background: #ced1e0; border-radius: 4px; overflow: hidden; }
.stages li { flex: 284 0 0; display: flex; align-items: center; font-size: 9px; color: #6b7693; position: relative; }
.stages li:last-child { flex-grow: 276; }
.stages li span { flex: 1; text-align: center; padding: 0 5px 2px 0; }
.stages li.done { background: #86b174; color: #3f4b53; }
.stages li svg { position: absolute; right: -3px; z-index: 1; }
.stages li.last { clip-path: polygon(0 0, calc(100% - 11px) 0, 100% 50%, calc(100% - 11px) 100%, 0 100%); }
.task-bar { display: flex; align-items: stretch; height: 32px; border-bottom: 1px solid #b9bdce; gap: 17px; padding: 0 3px 0 2px; margin-right: 4px; }
.task-bar .push { padding-top: 7px; }
.task-bar .tab { margin-right: 8px; height: 32px; padding-bottom: 2px; }
.tab { color: #6b7693; border-bottom: 3px solid transparent; white-space: nowrap; flex: none; }
.tab.on { border-bottom-color: #d17659; color: #3b4257; }
.empty { display: flex; justify-content: center; align-items: center; gap: 16px; height: 116px; padding: 2px 0 0 6px; color: #6b7693; }
.empty-box { width: 56px; height: 42px; border-radius: 5px; background: #babdce; display: grid; place-items: center; }
.empty-text { display: grid; gap: 14px; }
.empty-text svg { display: inline-block; margin: 0 1px; }

.lower { flex: 1; background: #c6cad6; display: flex; flex-direction: column; gap: 4px; min-height: 0; }
.sheet { background: #d5d7e2; border: 1px solid #c1c4d2; border-radius: 2px; padding: 0 16px; flex: none; }
.tabs { display: flex; gap: 16px; height: 35px; border-bottom: 1px solid #b9bdce; padding-left: 1px; }
.tabs .tab { height: 36px; padding-top: 1px; }
.files-head { display: flex; align-items: center; height: 61px; padding: 10px 7px 0 0; }
.files-head > svg { margin-bottom: 3px; }
h2 { font-size: 14px; line-height: 18px; font-weight: 500; margin-left: 7px; }
.files-head .dots { margin-left: 15px; }
.files-head .push { margin: 0 8px 14px auto; }
.files-head .push + .bare { margin-bottom: 14px; }
table { width: 100%; table-layout: fixed; border-collapse: separate; border-spacing: 0; }
.c-date { width: 175px; }
.c-author { width: 324px; }
.c-act { width: 89px; }
th { height: 42px; background: #babdce; text-align: left; font-weight: 400; padding: 0 1px; }
th:first-child { border-radius: 6px 0 0; }
th:last-child { border-radius: 0 6px 0 0; }
th.bar, td { padding: 0 4px; }
th.bar { background: linear-gradient(#6b7693, #6b7693) 0 50% / 1px 16px no-repeat #babdce; }
td { height: 42px; border-bottom: 1px solid #b9bdce; padding-top: 4px; }
td:last-child { padding: 0; }
.fname { display: flex; align-items: center; gap: 6px; padding-left: 7px; }
.fname a { margin-left: 10px; }
.acts { display: flex; justify-content: flex-end; gap: 2px; padding-right: 1px; margin-bottom: 6px; }
.drop { margin: 54px 0 17px; height: 112px; border: 1px dashed #b9bdce; border-radius: 8px; text-align: center; padding-top: 27px; line-height: 18px; }
.drop-title { font-size: 15px; line-height: 20px; margin-bottom: 4px; }
.notes { padding-top: 16px; height: 78px; }
.notes input { width: 100%; height: 37px; border: 1px solid #a5a8b6; border-radius: 5px; padding: 0 10px; }

.rail { width: 51px; flex: none; margin-top: 13px; background: #d5d7e2; border-radius: 6px 6px 0 0; display: flex; flex-direction: column; align-items: center; padding-top: 12px; }
.avatar { width: 31px; height: 31px; border-radius: 50%; background: #ced1e0; display: grid; place-items: center; position: relative; flex: none; }
.call { position: absolute; right: 1px; top: 2px; }
.gear { margin-top: 14px; }
.help { margin-top: 13px; }
.rail hr { width: 25px; height: 1px; border: 0; background: #b9bdce; margin: 15px 0 24px; flex: none; }
.rail-btn { width: 32px; height: 32px; border-radius: 5px; background: #ced1e0; display: grid; place-items: center; position: relative; margin-bottom: 12px; flex: none; }
.badge { position: absolute; right: -4px; top: -6px; width: 15px; height: 15px; border-radius: 50%; background: #6a7592; color: #d5d7e2; font-size: 10px; line-height: 15px; text-align: center; }
.scroll { width: 3px; background: #fff; }
.thumb { height: 78.600%; background: #d9dbe0; }

.modal { position: absolute; left: 50%; top: 402px; width: 464px; margin-left: -233px; background: #fff; border-radius: 6px; padding: 20px 20px 19px 19px; color: #2f374c; }
.modal-top { display: flex; justify-content: space-between; align-items: flex-start; gap: 8px; height: 88px; font-size: 13px; }
.modal-top .bare { height: 3px; }
.modal-acts { display: flex; justify-content: flex-end; gap: 6px; font-size: 13px; }
.modal-acts button { height: 33px; border-radius: 6px; padding: 0 14px; }
.save { background: #f1f1f1; color: #b9b9b9; }
.modal-acts .cancel { border: 1px solid #ff7543; color: #f0703f; }

.word { position: absolute; left: 3px; top: 536px; bottom: 0; width: 924px; border: 1px solid #7d8087; border-bottom: 0; background: #f3f2f1; display: flex; flex-direction: column; overflow: hidden; font: 12px/16px "Noto Sans", "Open Sans", sans-serif; color: #444; }
.wbar { height: 34px; flex: none; background: #2b579a; color: #b9cbe6; display: flex; align-items: center; padding-left: 21px; position: relative; }
.art { position: absolute; right: 0; top: 0; }
.wbar > :not(.art) { position: relative; }
.wl { fill: none; stroke: #a9bfe0; }
.auto { display: flex; align-items: center; margin-right: 13px; width: 136px; justify-content: space-between; }
.auto input { appearance: none; flex: none; width: 38px; height: 16px; border: 1px solid #fff; border-radius: 8px; background: radial-gradient(circle at 8px 7px, #fff 4px, transparent 4px); }
.undo { margin-left: 14px; }
.undo + .bare { margin-left: 11px; }
.more { margin-left: 16px; }
.wtitle { margin-left: 152px; width: 60px; white-space: nowrap; }
.wtitle .tri { margin-left: 6px; }
.find { margin: 0 auto 0 126px; }
.win { width: 46px; height: 34px; }
.wtabs { height: 34px; flex: none; display: flex; align-items: center; gap: 22px; padding-left: 15px; }
.wtabs > button { height: 24px; border-bottom: 3px solid transparent; white-space: nowrap; margin-top: 1px; }
.wtabs > .on { font-weight: 700; border-bottom-color: #2b579a; }
.wtabs > .share { margin: -4px 12px 0 auto; display: flex; align-items: center; gap: 6px; background: #fff; border: 1px solid #e1dfdd; border-radius: 2px; padding: 0 8px; color: #2b579a; font-weight: 700; height: 23px; }
.ribbon { display: flex; height: 91px; flex: none; position: relative; }
.grp { height: 88px; border-right: 1px solid #b5b3b1; display: flex; flex-direction: column; flex: none; }
.clip { width: 100px; }
.clip-in { display: flex; padding: 3px 15px 0 14px; justify-content: space-between; }
.clip-col { display: flex; flex-direction: column; gap: 7px; }
.big { display: flex; flex-direction: column; align-items: center; gap: 2px; font-size: 11px; height: 70px; }
.big .cr { margin-top: 4px; }
.cap { height: 12px; font-size: 11px; line-height: 12px; text-align: center; position: relative; margin: auto 0 -2px; white-space: nowrap; }
.ex { position: absolute; right: 3px; top: 2px; fill: none; stroke: #555; }
.clip .cap, .styles .cap { text-align: left; padding-left: 4px; }
.fontg .cap, .para .cap { padding-right: 24px; }
.fontg { width: 223px; padding-left: 8px; }
.para { width: 185px; padding-left: 7px; }
.row { display: flex; align-items: center; height: 24px; }
.row:first-child { height: 23px; }
.combo { position: relative; width: 43px; height: 23px; margin-left: 2px; border: 1px solid #c8c6c4; background: #fff; }
.combo select { appearance: none; display: block; width: 100%; height: 21px; padding: 0 3px; color: #222; }
.combo .cr { position: absolute; right: 2px; top: 8px; pointer-events: none; }
.combo.wide { width: 162px; margin-left: 0; }
.tool { height: 22px; display: flex; align-items: center; justify-content: center; font-size: 14px; line-height: 20px; flex: none; }
.pressed { background: #cfcdcb; border: 1px solid #979593; }
.cr { fill: none; stroke: #444; stroke-width: 1.300px; }
.sep { height: 22px; background: linear-gradient(#c8c6c4, #c8c6c4) 50% 0 / 1px 100% no-repeat; }
.tool sub, .tool sup { font-size: 8px; font-weight: 700; color: #1e86c8; line-height: 10px; }
.tool sub { align-self: flex-end; }
.tool sup { align-self: flex-start; }
.strike { font-size: 12px; }
.clear { font-size: 16px; }
.clear svg { margin: 8px 0 0 -4px; }
.effects { font-size: 17px; color: #fff; -webkit-text-stroke: 1px #1668ad; text-shadow: 0 0 2px #58aee8; }
.red { border-bottom: 4px solid #f00; padding: 0 3px; line-height: 14px; }
.case { font-size: 13px; }
.grow { font-size: 16px; }
.tool.grow svg, .tool.shrink svg { align-self: flex-start; margin-top: 2px; }
.pil { font-size: 16px; }
.srt { font: 700 9px "Noto Sans", sans-serif; fill: #555; stroke: none; }
.srt.a { fill: #1e86c8; }
.styles { width: 58px; padding-top: 3px; }
.edit { width: 106px; }
.edit .big { gap: 4px; }
.edit .big .cr { margin-top: 2px; }
.lens { width: 32px; height: 31px; background: #fff; border: 1px solid #c8c6c4; display: grid; place-items: center; }
.fold-rb { position: absolute; right: 9px; bottom: 10px; }
.canvas { flex: 1; background: linear-gradient(#d2d2d2, #e6e6e6 6px); padding: 18px 73px 0 56px; min-height: 0; }
.page { background: #fff; border: 1px solid #c6c6c6; border-bottom: 0; height: 100%; padding: 74px 55px 0 112px; color: #000; font: 17px/23px Lato, "Open Sans", sans-serif; }
.page p { white-space: nowrap; height: 23px; }
.page .mid { text-align: center; }
.page .title { font-size: 16px; }
.page .full { text-align: justify; text-align-last: justify; white-space: normal; }
.page .in { padding-left: 26px; }
mark { background: #ff0; font-weight: 700; color: #000; padding: 1px 0 2px; }
.gram { border-bottom: 3px double #2b5fd9; line-height: 18px; }
</style>
